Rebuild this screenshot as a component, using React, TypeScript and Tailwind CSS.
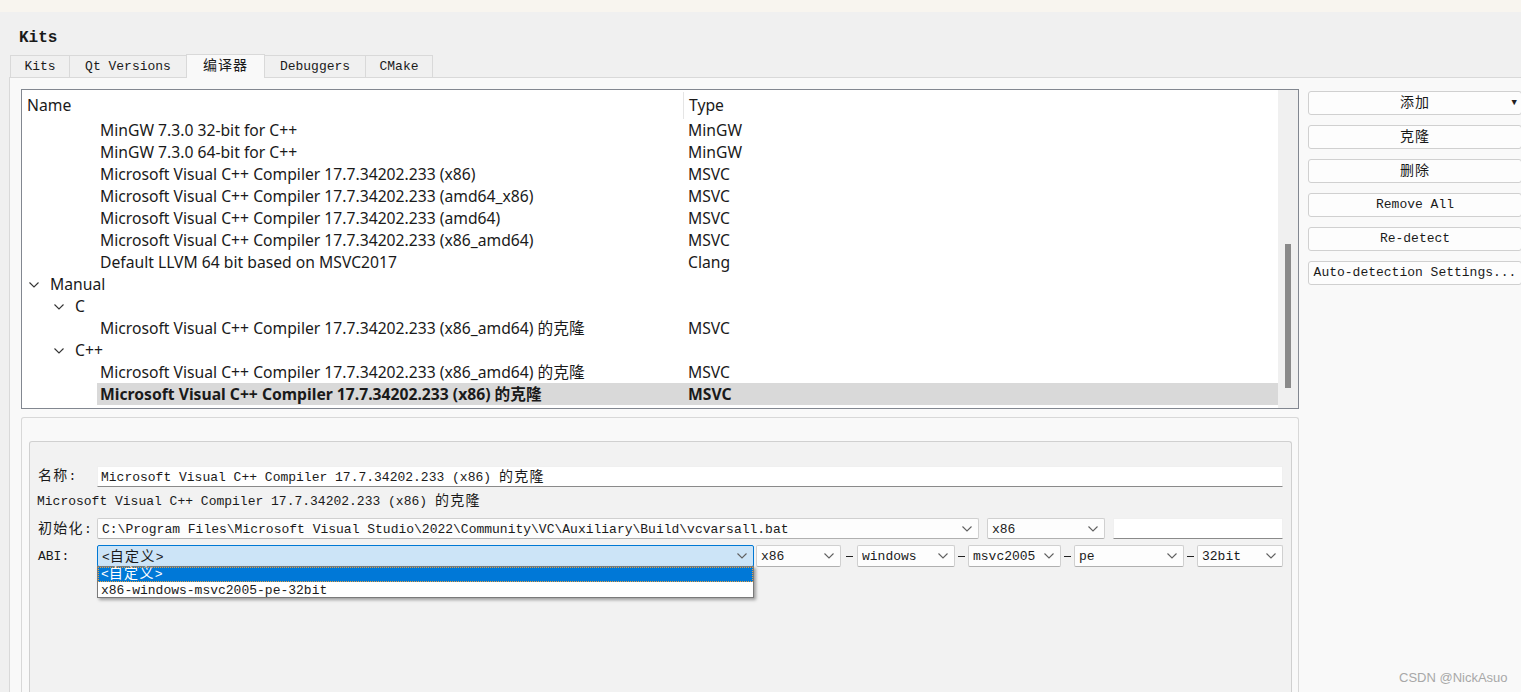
import React from "react";

const mono = "font-['Liberation_Mono','Noto_Sans_CJK_SC',monospace]";
const sans = "font-['Noto_Sans','Noto_Sans_CJK_SC',sans-serif]";

type Row = {
  level: number;
  name: string;
  type?: string;
  group?: boolean;
  bold?: boolean;
  selected?: boolean;
};

const rows: Row[] = [
  { level: 2, name: "MinGW 7.3.0 32-bit for C++", type: "MinGW" },
  { level: 2, name: "MinGW 7.3.0 64-bit for C++", type: "MinGW" },
  { level: 2, name: "Microsoft Visual C++ Compiler 17.7.34202.233 (x86)", type: "MSVC" },
  { level: 2, name: "Microsoft Visual C++ Compiler 17.7.34202.233 (amd64_x86)", type: "MSVC" },
  { level: 2, name: "Microsoft Visual C++ Compiler 17.7.34202.233 (amd64)", type: "MSVC" },
  { level: 2, name: "Microsoft Visual C++ Compiler 17.7.34202.233 (x86_amd64)", type: "MSVC" },
  { level: 2, name: "Default LLVM 64 bit based on MSVC2017", type: "Clang" },
  { level: 0, name: "Manual", group: true },
  { level: 1, name: "C", group: true },
  { level: 2, name: "Microsoft Visual C++ Compiler 17.7.34202.233 (x86_amd64) 的克隆", type: "MSVC" },
  { level: 1, name: "C++", group: true },
  { level: 2, name: "Microsoft Visual C++ Compiler 17.7.34202.233 (x86_amd64) 的克隆", type: "MSVC" },
  {
    level: 2,
    name: "Microsoft Visual C++ Compiler 17.7.34202.233 (x86) 的克隆",
    type: "MSVC",
    bold: true,
    selected: true,
  },
];

// CJK glyphs in the monospace widgets are double width
const Cjk = ({ children }: { children: React.ReactNode }) => (
  <span className="text-[14px] tracking-[1.3px]">{children}</span>
);

const Chevron = ({ className = "" }: { className?: string }) => (
  <svg width="10" height="6" viewBox="0 0 10 6" className={className}>
    <polyline points="0.5,0.5 5,5 9.5,0.5" fill="none" stroke="currentColor" strokeWidth="1.1" />
  </svg>
);

const TreeRow = ({ row }: { row: Row }) => {
  if (row.group) {
    return (
      <div className="flex h-[22px] items-center pt-[2px] text-[#1a1a1a]">
        <div className={row.level === 0 ? "w-[7px]" : "w-[32px]"} />
        <div className="w-[21px] flex items-center text-[#333]">
          <Chevron />
        </div>
        <span>{row.name}</span>
      </div>
    );
  }
  return (
    <div className="flex h-[22px]">
      <div className="w-[75px] shrink-0" />
      <div
        className={`flex flex-1 items-center pt-[2px] ${row.selected ? "bg-[#d9d9d9]" : ""} ${
          row.bold ? "font-bold" : ""
        } text-[#1a1a1a]`}
      >
        <span className="w-[588px] shrink-0 pl-[3px] whitespace-nowrap">{row.name}</span>
        <span className="pl-[3px]">{row.type}</span>
      </div>
    </div>
  );
};

const SideButton = ({ label, mono: isMono, arrow }: { label: string; mono?: boolean; arrow?: boolean }) => (
  <div
    className={`relative h-[24px] w-[214px] shrink-0 rounded-[3px] border border-[#d0d0d0] bg-[#fdfdfd] flex items-center justify-center whitespace-nowrap text-[13px] text-[#1a1a1a] ${mono}`}
  >
    <span className={isMono ? "" : "text-[14px] tracking-[1px]"}>{label}</span>
    {arrow && <span className="absolute right-[4px] top-[5px] text-[9px] text-[#222]">▼</span>}
  </div>
);

const Combo = ({
  width,
  children,
  active,
}: {
  width: string;
  children?: React.ReactNode;
  active?: boolean;
}) => (
  <div
    className={`${width} h-full shrink-0 rounded-[2px] border flex items-center justify-between pl-[4px] pr-[6px] ${
      active ? "bg-[#cce4f7] border-[#0078d4]" : "bg-[#fdfdfd] border-[#d0d0d0] border-b-[#b0b0b0]"
    }`}
  >
    <span className="whitespace-nowrap overflow-hidden pt-[2px]">{children}</span>
    <Chevron className="text-[#606060] shrink-0" />
  </div>
);

const Dash = ({ w }: { w: string }) => (
  <div className={`${w} shrink-0 flex justify-center items-center`}>
    <div className="w-[7px] h-[1px] bg-[#222] mt-[1px]" />
  </div>
);

const App = () => {
  const tabs = [
    { label: "Kits", w: "w-[60px]" },
    { label: "Qt Versions", w: "w-[118px] -ml-[1px]" },
    { label: "编译器", w: "w-[79px] -ml-[1px]", active: true },
    { label: "Debuggers", w: "w-[102px] -ml-[1px]" },
    { label: "CMake", w: "w-[68px] -ml-[1px]" },
  ];

  return (
    <div className="relative w-[1521px] h-[692px] overflow-hidden bg-[#f0f0f0] text-[#1a1a1a]">
      <div className="h-[12px] bg-[#f8f5ef]" />

      <div className="h-[680px] flex flex-col">
        {/* title */}
        <div className={`h-[42px] pl-[19px] pt-[16px] text-[16px] leading-[20px] font-bold ${mono}`}>Kits</div>

        {/* tabs */}
        <div className={`flex items-end h-[23px] pl-[10px] text-[13px] ${mono}`}>
          {tabs.map((t) => (
            <div
              key={t.label}
              className={`${t.w} flex items-center justify-center border border-b-0 border-[#d9d9d9] ${
                t.active ? "h-[24px] bg-[#f9f9f9] text-[14px] tracking-[1px] -mb-[1px] relative z-10" : "h-[22px] bg-[#f0f0f0]"
              }`}
            >
              {t.label}
            </div>
          ))}
        </div>

        {/* pane */}
        <div className="flex-1 ml-[9px] bg-[#f9f9f9] border-t border-l border-[#d9d9d9] flex flex-col">
          <div className="flex pt-[11px] pl-[11px]">
            {/* tree */}
            <div className={`w-[1278px] h-[320px] shrink-0 border border-[#828790] bg-white flex text-[15.7px] ${sans}`}>
              <div className="flex-1 flex flex-col">
                <div className="h-[29px] flex items-center pt-[2px]">
                  <span className="w-[661px] pl-[5px]">Name</span>
                  <div className="w-[1px] h-full bg-[#e5e5e5]" />
                  <span className="pl-[5px]">Type</span>
                </div>
                {rows.map((r, i) => (
                  <TreeRow key={i} row={r} />
                ))}
              </div>
              <div className="w-[20px] bg-[#f0f0f0] flex justify-center">
                <div className="w-[6px] h-[144px] mt-[154px] bg-[#8a8a8a]" />
              </div>
            </div>

            {/* side buttons */}
            <div className="ml-[9px] pt-[2px] flex flex-col gap-[10px]">
              <SideButton label="添加" arrow />
              <SideButton label="克隆" />
              <SideButton label="删除" />
              <SideButton label="Remove All" mono />
              <SideButton label="Re-detect" mono />
              <SideButton label="Auto-detection Settings..." mono />
            </div>
          </div>

          {/* details */}
          <div className="flex-1 mt-[8px] ml-[11px] w-[1278px] rounded-t-[3px] border border-b-0 border-[#d8d8d8] bg-[#f9f9f9] pl-[7px] pt-[23px]">
            <div className={`h-full w-[1263px] rounded-t-[3px] border border-b-0 border-[#d0d0d0] bg-[#f2f2f2] pl-[8px] text-[13px] ${mono}`}>
              {/* name row */}
              <div className="flex h-[21px] mt-[24px] items-center">
                <span className="w-[59px] shrink-0">
                  <Cjk>名称</Cjk>:
                </span>
                <div className="w-[1186px] h-full bg-white border border-[#f0f0f0] border-b-[#8a8a8a] flex items-center pl-[3px] pt-[1px] whitespace-nowrap">
                  <span>
                    Microsoft Visual C++ Compiler 17.7.34202.233 (x86) <Cjk>的克隆</Cjk>
                  </span>
                </div>
              </div>

              {/* description */}
              <div className="h-[26px] flex items-center pt-[3px] -ml-[1px] whitespace-nowrap">
                <span>
                  Microsoft Visual C++ Compiler 17.7.34202.233 (x86) <Cjk>的克隆</Cjk>
                </span>
              </div>

              {/* init row */}
              <div className="flex h-[21px] mt-[5px] items-center">
                <span className="w-[59px] shrink-0 pt-[1px]">
                  <Cjk>初始化</Cjk>:
                </span>
                <Combo width="w-[882px]">
                  {"C:\\Program Files\\Microsoft Visual Studio\\2022\\Community\\VC\\Auxiliary\\Build\\vcvarsall.bat"}
                </Combo>
                <div className="w-[8px]" />
                <Combo width="w-[118px]">x86</Combo>
                <div className="w-[8px]" />
                <div className="w-[170px] h-full bg-white border border-[#f0f0f0] border-b-[#8a8a8a]" />
              </div>

              {/* ABI row */}
              <div className="flex h-[22px] mt-[6px] items-center">
                <span className="w-[59px] shrink-0 pt-[2px]">ABI:</span>
                <div className="relative h-full">
                  <Combo width="w-[657px]" active>
                    &lt;<Cjk>自定义</Cjk>&gt;
                  </Combo>
                  <div className="absolute left-0 top-[21px] z-20 w-[657px] border border-[#7a7a7a] bg-white shadow-[2px_2px_3px_rgba(0,0,0,0.35)] leading-[15px]">
                    <div className="h-[15px] bg-[#0078d7] text-white pl-[3px] outline-1 outline-dotted outline-offset-[-1px] outline-[#e8a040]">
                      &lt;<Cjk>自定义</Cjk>&gt;
                    </div>
                    <div className="h-[15px] pl-[3px] pt-[1px]">x86-windows-msvc2005-pe-32bit</div>
                  </div>
                </div>
                <div className="w-[2px]" />
                <Combo width="w-[85px]">x86</Combo>
                <Dash w="w-[16px]" />
                <Combo width="w-[98px]">windows</Combo>
                <Dash w="w-[13px]" />
                <Combo width="w-[93px]">msvc2005</Combo>
                <Dash w="w-[13px]" />
                <Combo width="w-[110px]">pe</Combo>
                <Dash w="w-[13px]" />
                <Combo width="w-[86px]">32bit</Combo>
              </div>
            </div>
          </div>
        </div>
      </div>

      <div className="absolute left-[1399px] top-[668px] text-[13px] text-[#a8a8a8] font-['Liberation_Sans',sans-serif]">
        CSDN @NickAsuo
      </div>
    </div>
  );
};

export default App;
